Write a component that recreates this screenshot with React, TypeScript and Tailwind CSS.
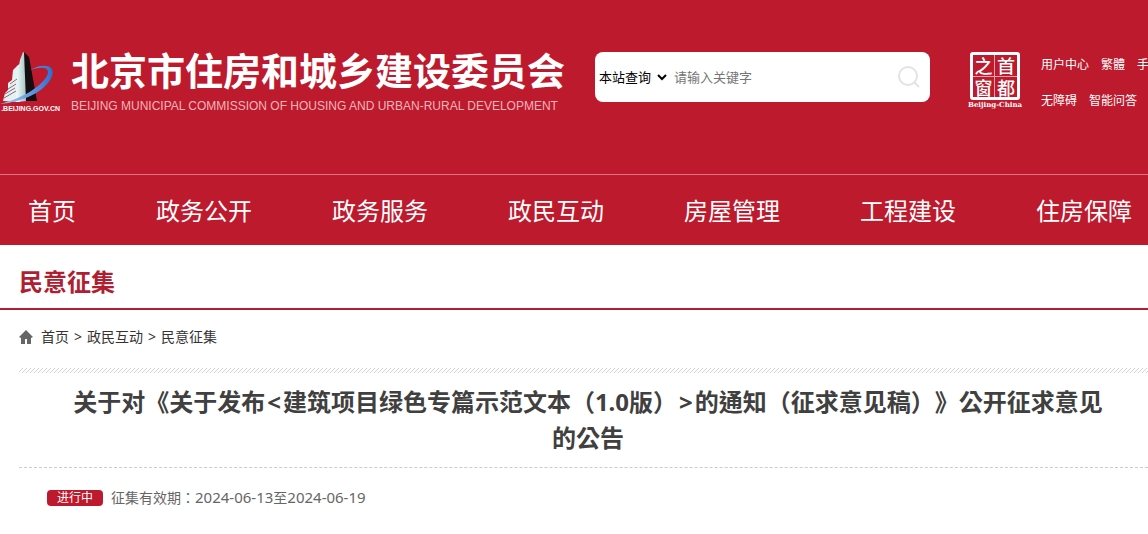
import React, { useState } from "react";

interface ILink {
  label: string;
  href: string;
}

const navItems: ILink[] = [
  { label: "首页", href: "#home" },
  { label: "政务公开", href: "#zwgk" },
  { label: "政务服务", href: "#zwfw" },
  { label: "政民互动", href: "#zmhd" },
  { label: "房屋管理", href: "#fwgl" },
  { label: "工程建设", href: "#gcjs" },
  { label: "住房保障", href: "#zfbz" },
];

const userLinks: ILink[] = [
  { label: "用户中心", href: "#user" },
  { label: "繁體", href: "#hant" },
  { label: "手", href: "#mobile" },
];

const helpLinks: ILink[] = [
  { label: "无障碍", href: "#access" },
  { label: "智能问答", href: "#qa" },
];

const crumbs: ILink[] = [
  { label: "首页", href: "#home" },
  { label: "政民互动", href: "#zmhd" },
  { label: "民意征集", href: "#myzj" },
];

const TowerLogo: React.FC = () => (
  <a href="#portal" className="flex w-[60px] shrink-0 flex-col items-end overflow-hidden text-white">
    <svg viewBox="0 0 60 52" className="h-[52px] w-[60px]" aria-hidden="true">
      <defs>
        <linearGradient id="tower" x1="0" y1="0" x2="1" y2="0">
          <stop offset="0" stopColor="#f2ffff" />
          <stop offset="1" stopColor="#9fbcbc" />
        </linearGradient>
        <linearGradient id="swoosh" x1="0" y1="0" x2="1" y2="0">
          <stop offset="0" stopColor="#a9cdf5" />
          <stop offset="1" stopColor="#2f6fd0" />
        </linearGradient>
      </defs>
      <path d="M3 49 L5 41 L8 38 L8 31 L12 28 L13 18 L18 13 L20 12 L20 50 Z" fill="#e6f2f2" />
      <path d="M5 42 L15 36 M4 46 L16 39 M8 37 L16 32 M10 32 L17 27" stroke="#8d6a70" strokeWidth="1" />
      <path d="M23 0 L25 1 L27 49 L16 50 L18 20 L20 8 Z" fill="url(#tower)" />
      <path d="M24 0 L29 5 L37 49 L26 49 Z" fill="#150d10" />
      <path d="M30 18 C42 11 56 12 52 24 C46 40 22 50 0 52 C20 47 40 36 47 24 C51 15 42 14 30 18 Z" fill="url(#swoosh)" />
    </svg>
    <span className="font-['Liberation_Sans',sans-serif] text-[7px] font-bold leading-[9px] whitespace-nowrap">
      .BEIJING.GOV.CN
    </span>
  </a>
);

const CapitalSeal: React.FC = () => (
  <a href="#capital" className="flex w-[56px] shrink-0 flex-col items-center text-white">
    <span className="grid h-12 w-[50px] grid-cols-2 rounded-[3px] border-3 border-white text-center font-['Noto_Sans_CJK_SC',sans-serif] text-lg font-medium leading-[20px]">
      <span className="border-r border-b border-white/60">之</span>
      <span className="border-b border-white/60">首</span>
      <span className="border-r border-white/60">窗</span>
      <span>都</span>
    </span>
    <span className="font-['DejaVu_Serif',serif] text-[7px] font-bold leading-[9px] whitespace-nowrap">
      Beijing-China
    </span>
  </a>
);

const SearchForm: React.FC = () => {
  const [scope, setScope] = useState("site");
  const [keyword, setKeyword] = useState("");

  const handleSubmit = (e: React.FormEvent) => {
    e.preventDefault();
  };

  return (
    <form onSubmit={handleSubmit} className="flex h-[50px] w-[335px] shrink-0 items-center rounded-lg bg-white pr-2 text-[13px]">
      <select
        aria-label="查询范围"
        value={scope}
        onChange={(e) => setScope(e.target.value)}
        className="h-8 w-[75px] bg-white text-black outline-none"
      >
        <option value="site">本站查询</option>
      </select>
      <input
        type="text"
        aria-label="关键字"
        placeholder="请输入关键字"
        value={keyword}
        onChange={(e) => setKeyword(e.target.value)}
        className="h-8 min-w-0 flex-1 pl-1 text-black outline-none placeholder:text-[#757575]"
      />
      <button type="submit" aria-label="搜索" className="p-px">
        <svg viewBox="0 0 24 24" className="h-6 w-6" fill="none" stroke="#e3e3e3" strokeWidth="2">
          <circle cx="11" cy="11" r="9" />
          <path d="M17 17 L22 22" />
        </svg>
      </button>
    </form>
  );
};

const LinkRow: React.FC<{ links: ILink[] }> = ({ links }) => (
  <div className="flex gap-3 whitespace-nowrap">
    {links.map((link) => (
      <a key={link.label} href={link.href}>{link.label}</a>
    ))}
  </div>
);

const App: React.FC = () => {
  return (
    <div className="overflow-hidden bg-white font-['Noto_Sans','Noto_Sans_CJK_SC',sans-serif] text-[#444]">
      <header className="bg-[#bd1a2d] text-white">
        {/* Banner */}
        <div className="flex h-[174px] items-start pt-[52px]">
          <TowerLogo />
          <div className="ml-[11px] w-[524px] shrink-0">
            <p className="text-[38px] font-bold leading-9 whitespace-nowrap">北京市住房和城乡建设委员会</p>
            <p className="mt-[10px] font-['Liberation_Sans',sans-serif] text-xs leading-4 whitespace-nowrap text-[#f3b5bb]">
              BEIJING MUNICIPAL COMMISSION OF HOUSING AND URBAN-RURAL DEVELOPMENT
            </p>
          </div>
          <SearchForm />
          <div className="ml-[37px] flex">
            <CapitalSeal />
            <div className="ml-[18px] flex flex-col gap-5 pt-[5px] text-xs leading-4">
              <LinkRow links={userLinks} />
              <LinkRow links={helpLinks} />
            </div>
          </div>
        </div>

        {/* Main navigation */}
        <nav className="flex h-[71px] items-center gap-20 border-t border-[#e0727c] pt-[2px] pl-7 text-2xl whitespace-nowrap">
          {navItems.map((item) => (
            <a key={item.label} href={item.href}>{item.label}</a>
          ))}
        </nav>
      </header>

      <h2 className="border-b-2 border-[#b01e32] pt-[21px] pb-[10px] pl-[19px] text-2xl font-bold leading-8 text-[#b01e32]">
        民意征集
      </h2>

      <main className="pl-[19px]">
        {/* Breadcrumb */}
        <div className="flex items-center pt-[17px] text-sm leading-5 text-[#333]">
          <svg viewBox="0 0 14 14" className="mr-2 h-[14px] w-[14px]" fill="#666" aria-hidden="true">
            <path d="M7 0 L14 7 L12 8 L12 14 L8 14 L8 9 L6 9 L6 14 L2 14 L2 8 L0 7 Z" />
          </svg>
          {crumbs.map((crumb, index) => (
            <React.Fragment key={crumb.label}>
              {index > 0 && <span className="px-[5px]">&gt;</span>}
              <a href={crumb.href}>{crumb.label}</a>
            </React.Fragment>
          ))}
        </div>

        <svg className="mt-[21px] block h-[5px] w-full" aria-hidden="true">
          <defs>
            <pattern id="hatch" width="4" height="4" patternUnits="userSpaceOnUse">
              <path d="M3 0h1v1h-1z M2 1h1v1h-1z M1 2h1v1h-1z M0 3h1v1h-1z" fill="#d4d4d4" />
            </pattern>
          </defs>
          <rect width="100%" height="100%" fill="url(#hatch)" />
        </svg>

        <h1 className="border-b border-dashed border-[#ccc] pt-[11px] pr-9 pb-[11px] pl-[45px] text-center font-['Noto_Sans','Noto_Sans_CJK_TC',sans-serif] text-2xl font-bold leading-9 text-[#404040] [text-spacing-trim:space-all]">
          关于对《关于发布<span className="px-[2px]">&lt;</span>建筑项目绿色专篇示范文本（1.0版）<span className="px-[2px]">&gt;</span>的通知（征求意见稿）》公开征求意见的公告
        </h1>

        <div className="flex items-center gap-2 pt-[19px] pb-7 pl-7 text-sm leading-5 text-[#666]">
          <span className="w-14 rounded bg-[#bd1a2d] text-center text-xs leading-4 text-white">进行中</span>
          <p>
            征集有效期<span className="font-['Noto_Sans_CJK_TC',sans-serif]">：</span>
            <span className="text-[15px]">2024-06-13</span>至<span className="text-[15px]">2024-06-19</span>
          </p>
        </div>
      </main>
    </div>
  );
};

export default App;
